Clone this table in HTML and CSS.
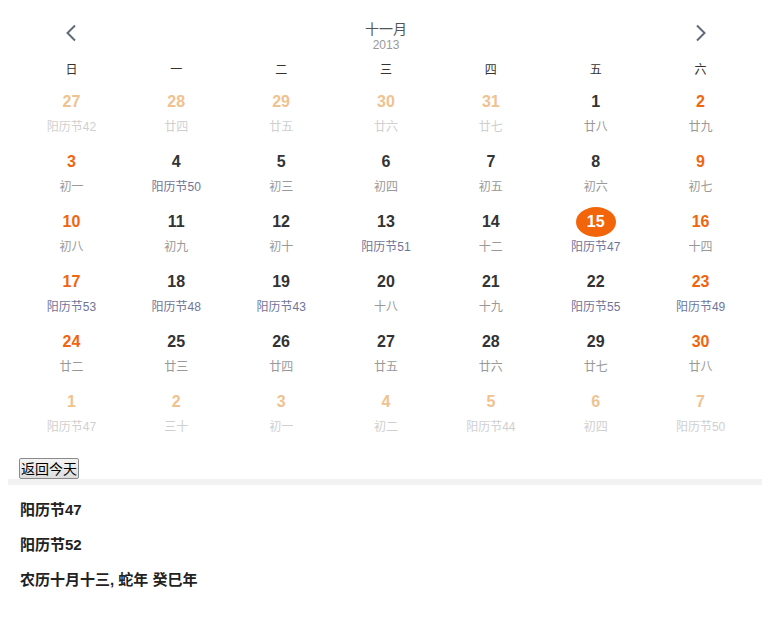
FILE: index.html
```html
<!DOCTYPE html>
<html lang="zh-CN">
<head>
  <meta charset="utf-8" />
  <title>日历</title>
  <link rel="stylesheet" href="styles.css">
</head>
<body>
  <div class="calendar">
    <div class="cal-head">
      <span class="nav prev">
        <svg width="12" height="18" viewBox="0 0 12 18"><path d="M10 1.5 L2.5 9 L10 16.5" fill="none" stroke="#5f6b78" stroke-width="2"/></svg>
      </span>
      <div class="title">
        <div class="month">十一月</div>
        <div class="year">2013</div>
      </div>
      <span class="nav next">
        <svg width="12" height="18" viewBox="0 0 12 18"><path d="M2 1.5 L9.5 9 L2 16.5" fill="none" stroke="#5f6b78" stroke-width="2"/></svg>
      </span>
    </div>

    <div class="week">
      <span>日</span><span>一</span><span>二</span><span>三</span><span>四</span><span>五</span><span>六</span>
    </div>

    <div class="days">
      <div class="day other"><b>27</b><i>阳历节42</i></div>
      <div class="day other"><b>28</b><i>廿四</i></div>
      <div class="day other"><b>29</b><i>廿五</i></div>
      <div class="day other"><b>30</b><i>廿六</i></div>
      <div class="day other"><b>31</b><i>廿七</i></div>
      <div class="day"><b>1</b><i>廿八</i></div>
      <div class="day weekend"><b>2</b><i>廿九</i></div>

      <div class="day weekend"><b>3</b><i>初一</i></div>
      <div class="day"><b>4</b><i class="fest">阳历节50</i></div>
      <div class="day"><b>5</b><i>初三</i></div>
      <div class="day"><b>6</b><i>初四</i></div>
      <div class="day"><b>7</b><i>初五</i></div>
      <div class="day"><b>8</b><i>初六</i></div>
      <div class="day weekend"><b>9</b><i>初七</i></div>

      <div class="day weekend"><b>10</b><i>初八</i></div>
      <div class="day"><b>11</b><i>初九</i></div>
      <div class="day"><b>12</b><i>初十</i></div>
      <div class="day"><b>13</b><i class="fest">阳历节51</i></div>
      <div class="day"><b>14</b><i>十二</i></div>
      <div class="day today"><b>15</b><i class="fest">阳历节47</i></div>
      <div class="day weekend"><b>16</b><i>十四</i></div>

      <div class="day weekend"><b>17</b><i class="fest">阳历节53</i></div>
      <div class="day"><b>18</b><i class="fest">阳历节48</i></div>
      <div class="day"><b>19</b><i class="fest">阳历节43</i></div>
      <div class="day"><b>20</b><i>十八</i></div>
      <div class="day"><b>21</b><i>十九</i></div>
      <div class="day"><b>22</b><i class="fest">阳历节55</i></div>
      <div class="day weekend"><b>23</b><i class="fest">阳历节49</i></div>

      <div class="day weekend"><b>24</b><i>廿二</i></div>
      <div class="day"><b>25</b><i>廿三</i></div>
      <div class="day"><b>26</b><i>廿四</i></div>
      <div class="day"><b>27</b><i>廿五</i></div>
      <div class="day"><b>28</b><i>廿六</i></div>
      <div class="day"><b>29</b><i>廿七</i></div>
      <div class="day weekend"><b>30</b><i>廿八</i></div>

      <div class="day other"><b>1</b><i>阳历节47</i></div>
      <div class="day other"><b>2</b><i>三十</i></div>
      <div class="day other"><b>3</b><i>初一</i></div>
      <div class="day other"><b>4</b><i>初二</i></div>
      <div class="day other"><b>5</b><i>阳历节44</i></div>
      <div class="day other"><b>6</b><i>初四</i></div>
      <div class="day other"><b>7</b><i>阳历节50</i></div>
    </div>

    <button class="back-today">返回今天</button>
  </div>

  <div class="info">
    <p>阳历节47</p>
    <p>阳历节52</p>
    <p>农历十月十三, 蛇年 癸巳年</p>
  </div>
</body>
</html>
```

FILE: styles.css
```css
body {
  margin: 8px;
  font-family: "Liberation Sans", "Noto Sans CJK SC", sans-serif;
  color: #333;
  background: #fff;
}
/* 日历主体 */
.calendar {
  padding: 12px 11px 0 11px;
}
.cal-head {
  display: grid;
  grid-template-columns: repeat(7, 1fr);
  height: 40px;
}
.cal-head .nav {
  display: flex;
  justify-content: center;
  padding-top: 4px;
}
.cal-head .prev {
  grid-column: 1;
}
.cal-head .title {
  grid-column: 4;
  text-align: center;
}
.cal-head .next {
  grid-column: 7;
}
.month {
  font-size: 14px;
  line-height: 18px;
  color: #555;
}
.year {
  font-size: 12px;
  line-height: 14px;
  color: #999;
}
/* 星期 */
.week {
  display: grid;
  grid-template-columns: repeat(7, 1fr);
  text-align: center;
  font-size: 12px;
  line-height: 20px;
}
/* 日期格子 */
.days {
  display: grid;
  grid-template-columns: repeat(7, 1fr);
  grid-auto-rows: 60px;
}
.day {
  display: flex;
  flex-direction: column;
  align-items: center;
  padding-top: 7px;
  box-sizing: border-box;
}
.day b {
  display: block;
  width: 40px;
  height: 30px;
  line-height: 30px;
  text-align: center;
  font-size: 16px;
  font-weight: bold;
  color: #333;
  border-radius: 50%;
}
.day i {
  font-style: normal;
  font-size: 12px;
  line-height: 16px;
  margin-top: 2px;
  color: #999;
}
.day i.fest {
  color: #6f7598;
}
.day.weekend b {
  color: #f0650f;
}
.day.other b {
  color: #efc28f;
}
.day.other i {
  color: #cfcfcf;
}
.day.today b {
  background: #f2650a;
  color: #fff;
}
/* 返回今天 */
.back-today {
  margin-top: 18px;
  display: block;
  font-family: "Noto Sans CJK SC", sans-serif;
  font-size: 14px;
  line-height: 17px;
  padding: 1px 1px;
  color: #000;
  background: linear-gradient(#f4f4f4, #dedede);
  border: 1px solid #8a8a8a;
  border-radius: 2px;
}
/* 下方信息 */
.info {
  border-top: 6px solid #f2f2f2;
  margin-right: 2px;
  padding: 0 12px;
}
.info p {
  margin: 15px 0 0 0;
  font-size: 15px;
  line-height: 20px;
  font-weight: bold;
  color: #222;
}
```
